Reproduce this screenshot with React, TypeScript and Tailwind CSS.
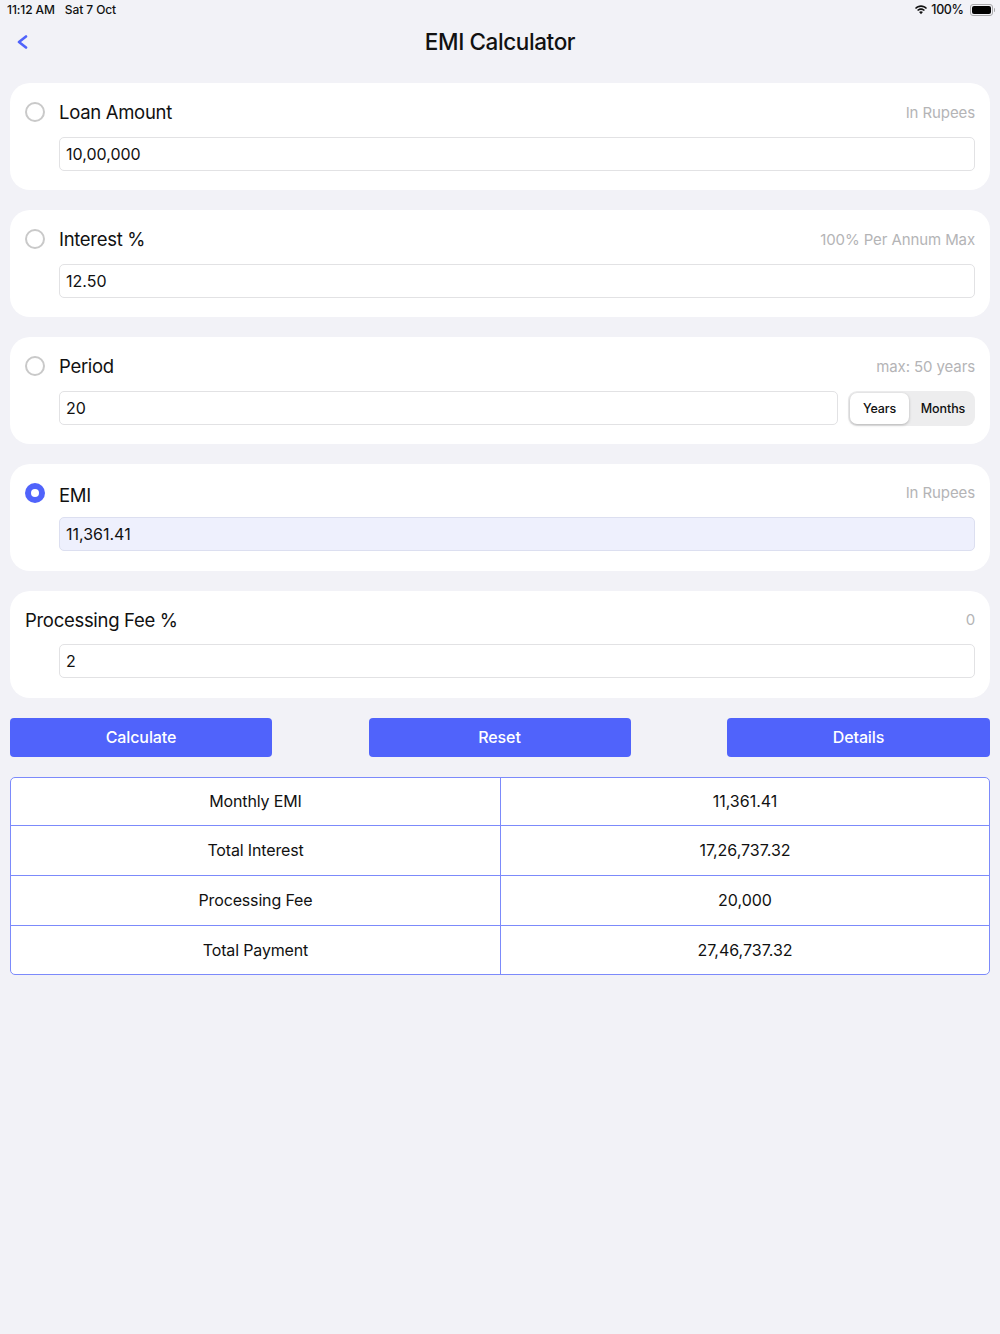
import { ReactNode } from "react"

const font = "font-['Inter','Liberation_Sans',sans-serif]"

function Radio({ checked }: { checked?: boolean }) {
  if (checked) {
    return (
      <span className="flex h-5 w-5 shrink-0 items-center justify-center rounded-full bg-[#5063fb]">
        <span className="h-2 w-2 rounded-full bg-white" />
      </span>
    )
  }
  return <span className="h-[19.500px] w-[19.500px] shrink-0 rounded-full border-2 border-[#c9c9c9] bg-white" />
}

function Field({ value, active }: { value: string; active?: boolean }) {
  return (
    <div
      className={`flex h-[34px] min-w-0 flex-1 items-center rounded-[5px] border px-[6px] text-[16px] text-[#111] ${
        active ? "border-[#dcdff0] bg-[#eef0fd]" : "border-[#e2e2e4] bg-white"
      }`}
    >
      {value}
    </div>
  )
}

function Card({
  label,
  hint,
  radio,
  checked,
  tight,
  children,
}: {
  label: string
  hint: string
  radio?: boolean
  checked?: boolean
  tight?: boolean
  children: ReactNode
}) {
  return (
    <section className={`rounded-[20px] bg-white px-[15px] pt-[14px] ${tight ? "pb-5" : "pb-[19px]"}`}>
      <div className={`flex items-center ${tight ? "h-[29px]" : "h-[30px]"}`}>
        {radio && (
          <div className="flex w-[34px] shrink-0">
            <Radio checked={checked} />
          </div>
        )}
        <span className={`relative text-[18.500px] tracking-[-0.3px] text-[#111] ${checked ? "top-[3px]" : "top-[1px]"}`}>{label}</span>
        <span className="relative top-[1px] ml-auto text-[15px] tracking-[-0.1px] text-[#b4b4b6]">{hint}</span>
      </div>
      <div className="mt-[10px] flex items-start pl-[34px]">{children}</div>
    </section>
  )
}

function Wifi() {
  return (
    <svg width="14" height="10" viewBox="0 0 15 11" fill="#111">
      <path d="M7.5 2.2c2.1 0 4 .8 5.5 2.2l1.100-1.200C12.300 1.400 10 .4 7.500.4S2.700 1.400.9 3.200L2 4.400c1.500-1.400 3.400-2.200 5.500-2.200z" />
      <path d="M7.500 5.400c1.200 0 2.300.5 3.200 1.300l1.100-1.200C10.600 4.400 9.100 3.700 7.500 3.700s-3.100.7-4.300 1.800l1.100 1.200c.9-.8 2-1.300 3.200-1.300z" />
      <path d="M7.500 7c-.8 0-1.500.3-2.100.8l2.100 2.500 2.100-2.500C9 7.300 8.300 7 7.500 7z" />
    </svg>
  )
}

function Battery() {
  return (
    <span className="flex items-center">
      <span className="flex h-[12px] w-[23px] items-center rounded-[3px] border border-[#a9a9ab] p-[1px]">
        <span className="h-full w-full rounded-[2px] bg-black" />
      </span>
      <span className="ml-[1px] h-1 w-[1.500px] rounded-r-sm bg-[#a9a9ab]" />
    </span>
  )
}

const buttons = [
  { name: "Calculate", width: "w-[262px]" },
  { name: "Reset", width: "w-[262px]" },
  { name: "Details", width: "w-[263px]" },
]

const rows = [
  { name: "Monthly EMI", value: "11,361.41", height: "h-[47px]" },
  { name: "Total Interest", value: "17,26,737.32", height: "h-[50px] border-t border-[#7c8afb]" },
  { name: "Processing Fee", value: "20,000", height: "h-[50px] border-t border-[#7c8afb]" },
  { name: "Total Payment", value: "27,46,737.32", height: "h-[49px] border-t border-[#7c8afb]" },
]

export default function App() {
  return (
    <div className={`${font} flex min-h-[1334px] flex-col bg-[#f2f2f7] text-[#111]`}>
      {/* status bar */}
      <div className="flex h-5 items-center justify-between pl-[7px] pr-[5px] text-[12px] font-medium tracking-[-0.1px]">
        <div className="flex gap-[10px]">
          <span>11:12 AM</span>
          <span>Sat 7 Oct</span>
        </div>
        <div className="flex items-center">
          <Wifi />
          <span className="ml-[3px] text-[12.500px] tracking-[-0.4px]">100%</span>
          <span className="ml-[6px]">
            <Battery />
          </span>
        </div>
      </div>

      {/* nav bar */}
      <header className="relative flex h-[44px] items-center justify-center">
        <svg className="absolute left-[17px] top-[15px]" width="11" height="14" viewBox="0 0 11 14" fill="none">
          <path d="M9 1.500 2 7l7 5.500" stroke="#5063fb" strokeWidth="2.600" strokeLinecap="round" strokeLinejoin="round" />
        </svg>
        <h1 className="text-[22.500px] font-medium tracking-[-0.4px]">EMI Calculator</h1>
      </header>

      <main className="mt-[19px] flex flex-col gap-5 px-[10px]">
        <Card label="Loan Amount" hint="In Rupees" radio>
          <Field value="10,00,000" />
        </Card>
        <Card label="Interest %" hint="100% Per Annum Max" radio>
          <Field value="12.50" />
        </Card>
        <Card label="Period" hint="max: 50 years" radio>
          <Field value="20" />
          <div className="-mb-px ml-[10px] flex h-[35px] w-[127px] shrink-0 rounded-[9px] bg-[#ededee] p-[2px] pt-[2px] text-[12.500px] font-medium tracking-[-0.1px]">
            <div className="flex w-[59px] items-center justify-center rounded-[7px] bg-white pt-[1px] shadow-[0_1px_3px_rgba(0,0,0,0.25)]">Years</div>
            <div className="flex flex-1 items-center justify-center pl-1 pt-[1px]">Months</div>
          </div>
        </Card>
        <Card label="EMI" hint="In Rupees" radio checked tight>
          <Field value="11,361.41" active />
        </Card>
        <Card label="Processing Fee %" hint="0" tight>
          <Field value="2" />
        </Card>

        <div className="flex justify-between">
          {buttons.map((b) => (
            <button
              key={b.name}
              className={`flex h-[39px] items-center justify-center rounded-[4px] bg-[#5063fb] pb-[1px] text-[16px] font-medium tracking-[-0.1px] text-white ${b.width}`}
            >
              {b.name}
            </button>
          ))}
        </div>

        <div className="overflow-hidden rounded-[5px] border border-[#7c8afb] bg-white">
          {rows.map((row) => (
            <div key={row.name} className={`grid grid-cols-[490px_1fr] pb-[1px] text-[16px] ${row.height}`}>
              <div className="-mb-[1px] flex items-center justify-center border-r border-[#7c8afb] pb-[1px] tracking-[-0.15px]">{row.name}</div>
              <div className="flex items-center justify-center">{row.value}</div>
            </div>
          ))}
        </div>
      </main>
    </div>
  )
}
